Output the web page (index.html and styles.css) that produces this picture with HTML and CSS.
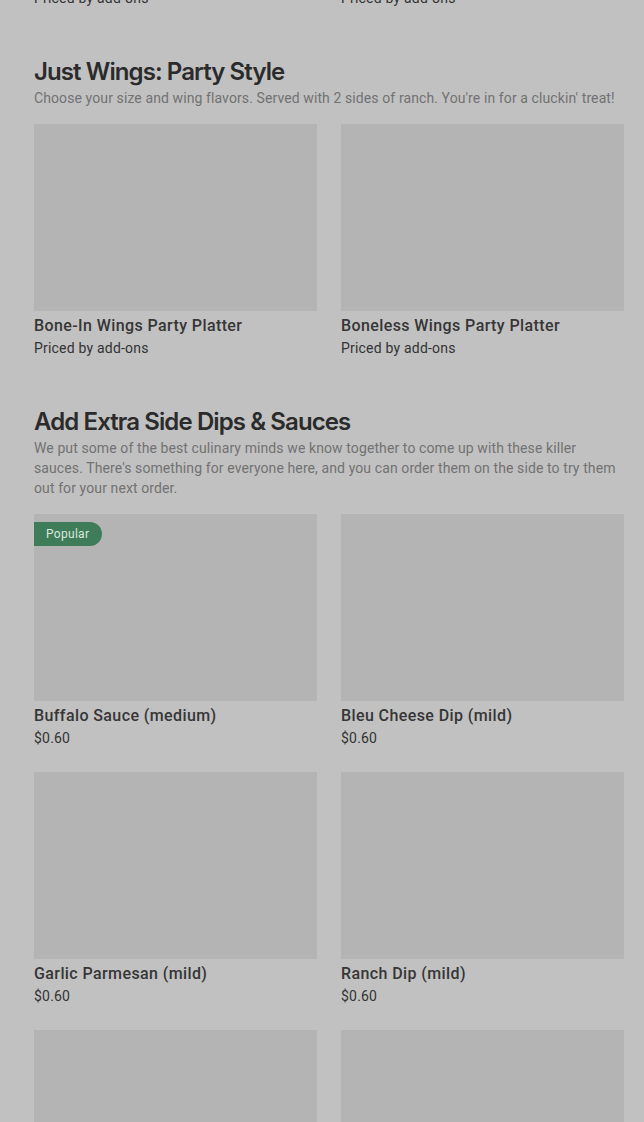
FILE: index.html
```html
<!DOCTYPE html>
<html lang="en">
<head>
<meta charset="utf-8">
<title>Menu</title>
<link rel="stylesheet" href="styles.css">
</head>
<body>
<main class="menu">
  <div class="tail grid">
    <div class="price">Priced by add-ons</div>
    <div class="price">Priced by add-ons</div>
  </div>

  <section class="section">
    <h2 class="heading">Just Wings: Party Style</h2>
    <p class="desc">Choose your size and wing flavors. Served with 2 sides of ranch. You're in for a cluckin' treat!</p>
    <div class="grid">
      <div class="card">
        <div class="thumb"></div>
        <div class="title">Bone-In Wings Party Platter</div>
        <div class="price">Priced by add-ons</div>
      </div>
      <div class="card">
        <div class="thumb"></div>
        <div class="title">Boneless Wings Party Platter</div>
        <div class="price">Priced by add-ons</div>
      </div>
    </div>
  </section>

  <section class="section">
    <h2 class="heading">Add Extra Side Dips &amp; Sauces</h2>
    <p class="desc">We put some of the best culinary minds we know together to come up with these killer sauces. There's something for everyone here, and you can order them on the side to try them out for your next order.</p>
    <div class="grid">
      <div class="card">
        <div class="thumb"><span class="badge">Popular</span></div>
        <div class="title">Buffalo Sauce (medium)</div>
        <div class="price">$0.60</div>
      </div>
      <div class="card">
        <div class="thumb"></div>
        <div class="title">Bleu Cheese Dip (mild)</div>
        <div class="price">$0.60</div>
      </div>
      <div class="card">
        <div class="thumb"></div>
        <div class="title">Garlic Parmesan (mild)</div>
        <div class="price">$0.60</div>
      </div>
      <div class="card">
        <div class="thumb"></div>
        <div class="title">Ranch Dip (mild)</div>
        <div class="price">$0.60</div>
      </div>
      <div class="card">
        <div class="thumb"></div>
      </div>
      <div class="card">
        <div class="thumb"></div>
      </div>
    </div>
  </section>
</main>
</body>
</html>
```
FILE: styles.css
```css
html, body {
  margin: 0;
  padding: 0;
  background: #c1c1c1;
  overflow: hidden;
}
body {
  font-family: Roboto, "Liberation Sans", sans-serif;
  color: #333333;
}
.menu {
  padding: 0 20px 0 34px;
}
.grid {
  display: grid;
  grid-template-columns: 1fr 1fr;
  column-gap: 24px;
  row-gap: 24px;
}
.tail {
  margin-top: -12px;
}
.section {
  padding-top: 48px;
}
.heading {
  margin: 0;
  font-family: Inter, Roboto, sans-serif;
  font-size: 24px;
  font-weight: 600;
  letter-spacing: -0.9px;
  line-height: 32px;
  color: #2b2b2b;
}
.desc {
  margin: 0 0 16px;
  font-size: 14px;
  line-height: 20px;
  letter-spacing: 0.1px;
  color: #727272;
}
.card {
  display: flex;
  flex-direction: column;
}
.thumb {
  position: relative;
  height: 187px;
  background: #b4b4b4;
}
.title {
  font-size: 16px;
  font-weight: 500;
  line-height: 24px;
  letter-spacing: 0.4px;
  margin-top: 3px;
  color: #363636;
}
.price {
  font-size: 14px;
  line-height: 20px;
  letter-spacing: 0.2px;
  color: #333333;
}
.badge {
  position: absolute;
  top: 8px;
  left: 0;
  height: 24px;
  padding: 0 13px 0 12px;
  display: flex;
  align-items: center;
  font-size: 12px;
  letter-spacing: 0.3px;
  color: #d8e8dc;
  background: #3f7c5a;
  border-radius: 0 12px 12px 0;
}
```
